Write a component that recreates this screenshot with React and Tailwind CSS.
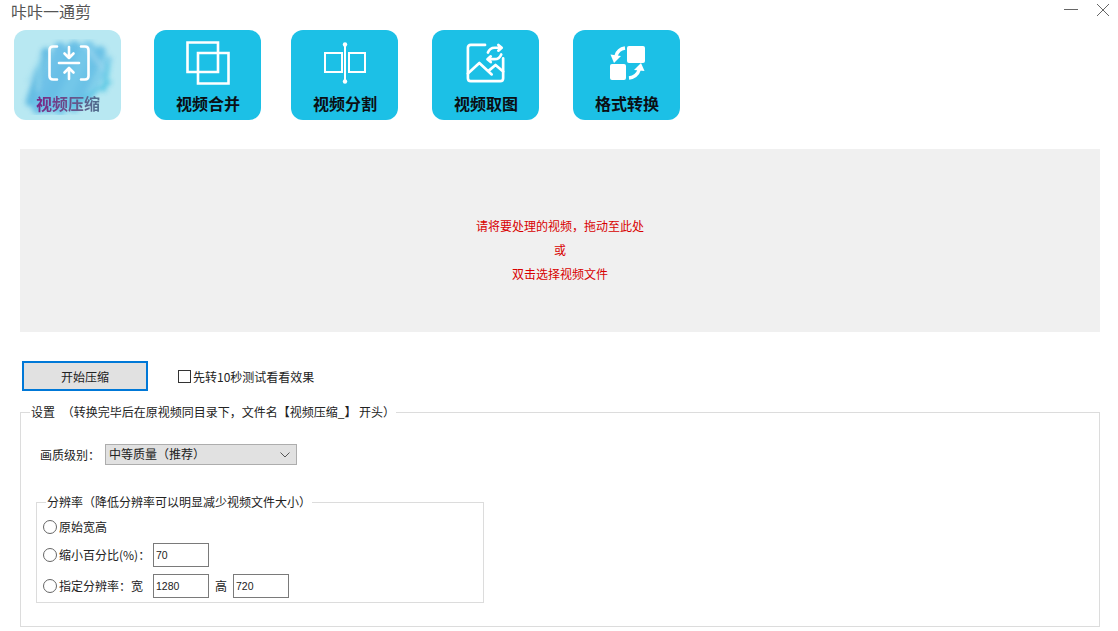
import React from 'react'

const font = { fontFamily: '"Noto Sans CJK SC", "Liberation Sans", sans-serif' }

const brushStrokes = [
  [16, 72, 32, 22, 9, '#4aaede'],
  [24, 78, 46, 18, 12, '#55b4e4'],
  [34, 76, 60, 18, 14, '#4fb2e2'],
  [46, 78, 74, 18, 14, '#5cbce6'],
  [60, 76, 86, 22, 12, '#52b6e2'],
  [74, 70, 94, 30, 8, '#6cc6e8'],
  [24, 60, 26, 30, 3, '#7fd0ea'],
  [90, 60, 94, 36, 4, '#38bde0'],
  [56, 78, 96, 52, 3, '#2fb9de'],
  [14, 52, 28, 26, 2, '#8fd6ee'],
  [72, 16, 90, 40, 3, '#8ecfec'],
]

function BrushBackground() {
  return (
    <svg className="absolute inset-0" width="107" height="90" viewBox="0 0 107 90" fill="none" strokeLinecap="round">
      <filter id="soft"><feGaussianBlur stdDeviation="2.6" /></filter>
      <g filter="url(#soft)" opacity="0.75">
        {brushStrokes.map(([x1, y1, x2, y2, w, c], i) => (
          <line key={i} x1={x1} y1={y1} x2={x2} y2={y2} stroke={c} strokeWidth={w} />
        ))}
      </g>
    </svg>
  )
}

function CompressIcon() {
  return (
    <svg width="42" height="36" viewBox="0 0 42 36" fill="none" stroke="white" strokeWidth="2.6" strokeLinecap="round" strokeLinejoin="round">
      <path d="M9 1.500H5Q1.500 1.500 1.500 5V31Q1.500 34.500 5 34.500H9" />
      <path d="M33 1.500H37Q40.500 1.500 40.500 5V31Q40.500 34.500 37 34.500H33" />
      <path d="M11 18H31" />
      <path d="M21 2V13M16.500 8.500L21 13L25.500 8.500" />
      <path d="M21 34V23M16.500 27.500L21 23L25.500 27.500" />
    </svg>
  )
}

function MergeIcon() {
  return (
    <svg width="44" height="44" viewBox="0 0 44 44" fill="none" stroke="white" strokeWidth="2.6">
      <path d="M1.500 1.500H32V31H1.500Z" />
      <path d="M12 12H42.500V42.500H12Z" />
    </svg>
  )
}

function SplitIcon() {
  return (
    <svg width="42" height="42" viewBox="0 0 42 42" fill="none" stroke="white" strokeWidth="2">
      <path d="M1 11H18V30H1Z" />
      <path d="M25 11H41V30H25Z" />
      <path d="M21 2V40" />
      <circle cx="21" cy="2.500" r="2.200" fill="white" stroke="none" />
      <circle cx="21" cy="39.500" r="2.200" fill="white" stroke="none" />
    </svg>
  )
}

function PictureIcon() {
  return (
    <svg width="40" height="40" viewBox="0 0 42 42" fill="none" stroke="white" strokeWidth="2.800" strokeLinecap="round" strokeLinejoin="round">
      <path d="M20 2H5Q2 2 2 5V37Q2 40 5 40H36Q39 40 39 37V16" />
      <path d="M2 32L14 21L27 33M24 29L31 23L39 30" />
      <path d="M23 10Q25 5 30 5H37M34 2L37.500 5L34 8" />
      <path d="M37 12Q35 17 30 17H23M26 14L22.500 17L26 20" />
    </svg>
  )
}

function ConvertIcon() {
  return (
    <svg width="35" height="34" viewBox="0 0 35 34" fill="white">
      <rect x="17" y="0" width="18" height="17" rx="2" />
      <rect x="0" y="18" width="16" height="16" rx="2" />
      <path d="M15 2Q8 3 6 10" fill="none" stroke="white" strokeWidth="3.400" />
      <path d="M0.500 8.500L11 10L4 17Z" />
      <path d="M19 32Q27 31 29.500 23" fill="none" stroke="white" strokeWidth="3.400" />
      <path d="M34.500 25L24 24L31 17Z" />
    </svg>
  )
}

function ToolButton({ label, children, className }) {
  return (
    <div className={`w-[107px] h-[90px] rounded-xl bg-[#1cc0e6] flex flex-col items-center ${className}`}>
      <div className="h-[65px] flex items-center justify-center pl-[1px]">{children}</div>
      <div className="text-[16px] leading-[20px] font-bold text-[#0b0f14] -mt-[2px] pl-[1px]">{label}</div>
    </div>
  )
}

function Radio({ label }) {
  return (
    <span className="flex items-center">
      <span className="w-[14px] h-[14px] rounded-full border border-[#666] bg-white mr-[2px]" />
      <span>{label}</span>
    </span>
  )
}

function TextBox({ value }) {
  return (
    <div className="w-[56px] h-[24px] border border-[#7a7a7a] bg-white pl-[2px] text-[10.500px] leading-[22px] text-[#222]" style={{ fontFamily: '"Liberation Sans", sans-serif' }}>
      {value}
    </div>
  )
}

export default function App() {
  return (
    <div className="w-[1118px] h-[631px] bg-white overflow-hidden text-[12px] text-[#222]" style={font}>
      {/* title bar */}
      <div className="h-[30px] flex justify-between pl-[11px] pr-[8px]">
        <div className="text-[16px] leading-[22px] text-[#555]">咔咔一通剪</div>
        <div className="flex gap-[18px] pt-[3px]">
          <svg width="14" height="14" viewBox="0 0 14 14" stroke="#666" strokeWidth="1"><path d="M0 6.500H14" /></svg>
          <svg width="14" height="14" viewBox="0 0 14 14" stroke="#666" strokeWidth="1"><path d="M1 1L13 13M13 1L1 13" /></svg>
        </div>
      </div>

      {/* toolbar */}
      <div className="flex pl-[14px]">
        <div className="relative w-[107px] h-[90px] rounded-xl overflow-hidden bg-[#b8e8f2] flex flex-col items-center">
          <BrushBackground />
          <div className="relative h-[65px] flex items-center justify-center pl-[3px]"><CompressIcon /></div>
          <div className="relative text-[16px] leading-[20px] font-bold -mt-[2px] pl-[1px] bg-gradient-to-r from-[#7a1f86] to-[#4c6f8e] bg-clip-text text-transparent">视频压缩</div>
        </div>
        <ToolButton label="视频合并" className="ml-[33px]"><MergeIcon /></ToolButton>
        <ToolButton label="视频分割" className="ml-[30px]"><SplitIcon /></ToolButton>
        <ToolButton label="视频取图" className="ml-[34px]"><PictureIcon /></ToolButton>
        <ToolButton label="格式转换" className="ml-[34px]"><ConvertIcon /></ToolButton>
      </div>

      {/* drop area */}
      <div className="ml-[20px] mt-[29px] w-[1080px] h-[183px] bg-[#f0f0f0] flex flex-col items-center justify-center pt-[19px] text-[12px] leading-[24px] text-[#d80000]">
        <div>请将要处理的视频，拖动至此处</div>
        <div>或</div>
        <div>双击选择视频文件</div>
      </div>

      {/* start row */}
      <div className="ml-[22px] mt-[29px] flex items-center">
        <div className="w-[126px] h-[30px] border-2 border-[#0078d7] bg-[#e1e1e1] flex items-center justify-center pt-[1px]">开始压缩</div>
        <span className="ml-[30px] w-[13px] h-[13px] border border-[#333] bg-white" />
        <span className="ml-[2px] pt-[1px]">先转10秒测试看看效果</span>
      </div>

      {/* settings */}
      <fieldset className="ml-[20px] mt-[13px] w-[1080px] h-[223px] border border-[#dcdcdc] pl-[19px]">
        <legend className="-ml-[10px] px-[1px] leading-[16px]">设置<span className="ml-[4px]"> </span>（转换完毕后在原视频同目录下，文件名【视频压缩_】 开头）</legend>
        <div className="flex items-center mt-[24px]">
          <span>画质级别：</span>
          <div className="ml-[5px] w-[192px] h-[21px] border border-[#adadad] bg-[#e1e1e1] flex items-center justify-between pl-[3px] pr-[6px]">
            <span className="-mt-[1px]">中等质量（推荐）</span>
            <svg width="10" height="6" viewBox="0 0 10 6" fill="none" stroke="#555"><path d="M0.500 0.500L5 5L9.500 0.500" /></svg>
          </div>
        </div>
        <fieldset className="-ml-[4px] mt-[29px] w-[448px] h-[109px] border border-[#dcdcdc] pl-[6px]">
          <legend className="ml-[3px] px-[1px] leading-[16px]">分辨率（降低分辨率可以明显减少视频文件大小）</legend>
          <div className="h-[24px] mt-[5px] flex items-center"><Radio label="原始宽高" /></div>
          <div className="mt-[4px] flex items-center">
            <div className="w-[110px]"><Radio label="缩小百分比(%)：" /></div>
            <TextBox value="70" />
          </div>
          <div className="mt-[7px] flex items-center">
            <div className="w-[110px]"><Radio label="指定分辨率：宽" /></div>
            <TextBox value="1280" />
            <span className="w-[24px] text-center">高</span>
            <TextBox value="720" />
          </div>
        </fieldset>
      </fieldset>
    </div>
  )
}
